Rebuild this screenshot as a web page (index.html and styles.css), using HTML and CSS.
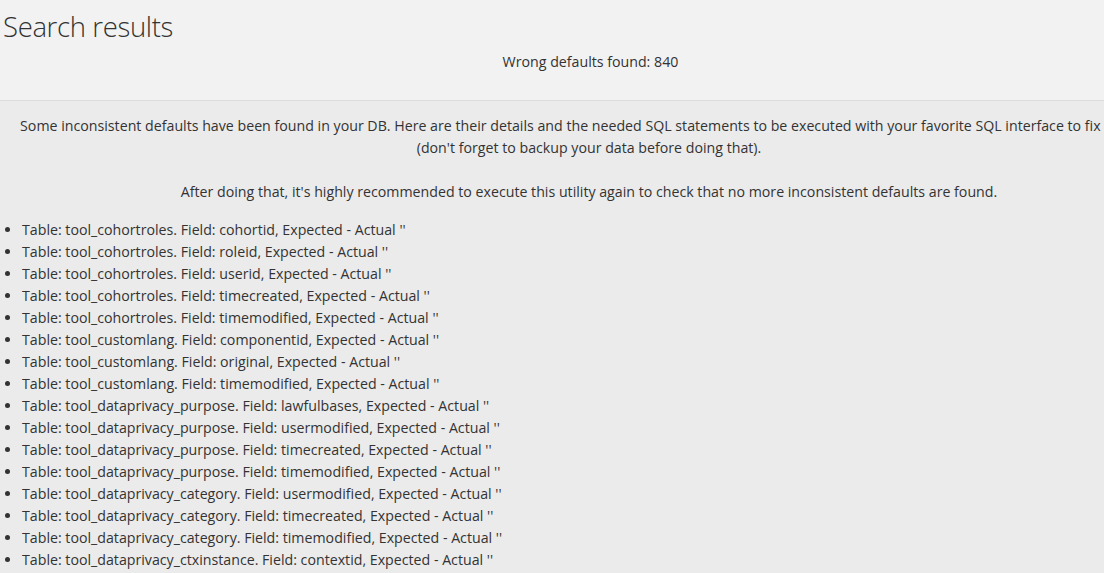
FILE: index.html
```html
<!DOCTYPE html>
<html lang="en">
<head>
  <meta charset="UTF-8" />
  <title>Search results</title>
  <link rel="stylesheet" href="styles.css">
</head>
<body>
  <div class="page">
    <!-- summary -->
    <div class="summary">
      <h1>Search results</h1>
      <p class="count">Wrong defaults found: 840</p>
    </div>

    <!-- details -->
    <div class="details">
      <p class="info">
        Some inconsistent defaults have been found in your DB. Here are their details and the needed SQL statements to be executed with your favorite SQL interface to fix them all (don't forget to backup your data before doing that).<br><br>
        After doing that, it's highly recommended to execute this utility again to check that no more inconsistent defaults are found.
      </p>
      <ul class="defaults">
        <li>Table: tool_cohortroles. Field: cohortid, Expected - Actual ''</li>
        <li>Table: tool_cohortroles. Field: roleid, Expected - Actual ''</li>
        <li>Table: tool_cohortroles. Field: userid, Expected - Actual ''</li>
        <li>Table: tool_cohortroles. Field: timecreated, Expected - Actual ''</li>
        <li>Table: tool_cohortroles. Field: timemodified, Expected - Actual ''</li>
        <li>Table: tool_customlang. Field: componentid, Expected - Actual ''</li>
        <li>Table: tool_customlang. Field: original, Expected - Actual ''</li>
        <li>Table: tool_customlang. Field: timemodified, Expected - Actual ''</li>
        <li>Table: tool_dataprivacy_purpose. Field: lawfulbases, Expected - Actual ''</li>
        <li>Table: tool_dataprivacy_purpose. Field: usermodified, Expected - Actual ''</li>
        <li>Table: tool_dataprivacy_purpose. Field: timecreated, Expected - Actual ''</li>
        <li>Table: tool_dataprivacy_purpose. Field: timemodified, Expected - Actual ''</li>
        <li>Table: tool_dataprivacy_category. Field: usermodified, Expected - Actual ''</li>
        <li>Table: tool_dataprivacy_category. Field: timecreated, Expected - Actual ''</li>
        <li>Table: tool_dataprivacy_category. Field: timemodified, Expected - Actual ''</li>
        <li>Table: tool_dataprivacy_ctxinstance. Field: contextid, Expected - Actual ''</li>
        <li>Table: tool_dataprivacy_ctxinstance. Field: purposeid, Expected - Actual ''</li>
        <li>Table: tool_dataprivacy_ctxinstance. Field: categoryid, Expected - Actual ''</li>
      </ul>
    </div>
  </div>
</body>
</html>
```
FILE: styles.css
```css
html, body {
  overflow: hidden;
}

body {
  margin: 0;
  font-family: "Open Sans", "Noto Sans", sans-serif;
  font-size: 14.2px;
  line-height: 22px;
  color: #333;
  background-color: #ebebeb;
}

.page {
  width: 1178px;
}

.summary {
  background-color: #f2f2f2;
  border-bottom: 1px solid #dcdcdc;
  padding: 7px 0 28px 3px;
  height: 101px;
  box-sizing: border-box;
}

h1 {
  font-size: 27.5px;
  font-weight: 300;
  letter-spacing: -0.35px;
  line-height: 40px;
  margin: 0;
}

.count {
  text-align: center;
  margin: 4px 0 0;
}

.details {
  padding: 14px 15px 0;
}

.info {
  text-align: center;
  margin: 0 0 16px;
}

.defaults {
  margin: 0 0 0 -15px;
  padding-left: 22px;
}
```
